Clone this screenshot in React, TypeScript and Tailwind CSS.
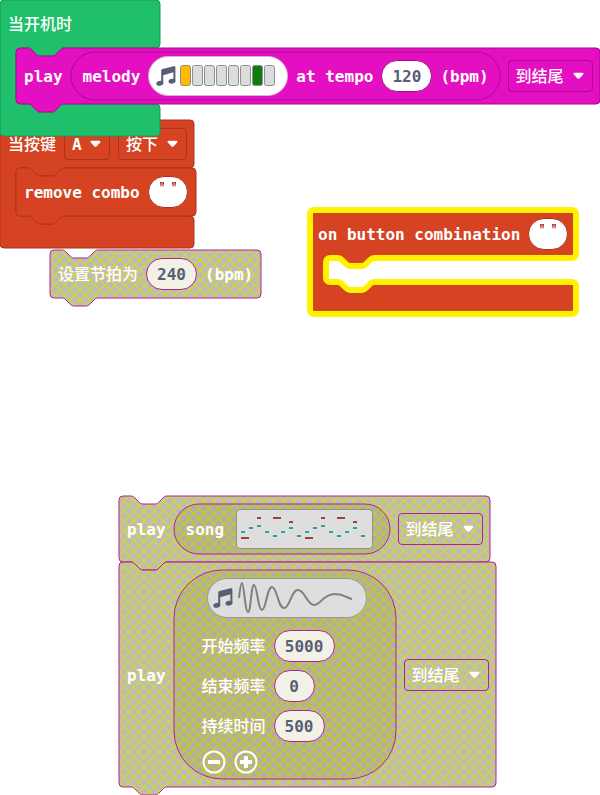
import { useId, type ReactNode } from "react";

const NOTCH_RIGHT = "c2,0 3,1 4,2 l4,4 c1,1 2,2 4,2 h12 c2,0 3,-1 4,-2 l4,-4 c1,-1 2,-2 4,-2";
const NOTCH_LEFT = "c-2,0 -3,1 -4,2 l-4,4 c-1,1 -2,2 -4,2 h-12 c-2,0 -3,-1 -4,-2 l-4,-4 c-1,-1 -2,-2 -4,-2";

/** Outline of a statement block that snaps above and below its neighbours. */
function stackPath(w: number, h: number) {
  return `M0,4 a4,4 0 0 1 4,-4 h8 ${NOTCH_RIGHT} H${w - 4} a4,4 0 0 1 4,4 V${h - 4} a4,4 0 0 1 -4,4 H48 ${NOTCH_LEFT} H4 a4,4 0 0 1 -4,-4 z`;
}

/** Outline of an event block that wraps a statement slot. */
function eventPath(w: number, head: number, slot: number, foot: number) {
  const end = head + slot;
  return `M0,4 a4,4 0 0 1 4,-4 H${w - 4} a4,4 0 0 1 4,4 V${head - 4} a4,4 0 0 1 -4,4 H64 ${NOTCH_LEFT} H20 a4,4 0 0 0 -4,4 V${end - 4} a4,4 0 0 0 4,4 h8 ${NOTCH_RIGHT} H${w - 4} a4,4 0 0 1 4,4 V${end + foot - 4} a4,4 0 0 1 -4,4 H4 a4,4 0 0 1 -4,-4 z`;
}

/** Outline of a value block with rounded ends. */
function valuePath(w: number, h: number, r: number) {
  return `M${r},0 H${w - r} a${r},${r} 0 0 1 ${r},${r} V${h - r} a${r},${r} 0 0 1 -${r},${r} H${r} a${r},${r} 0 0 1 -${r},-${r} V${r} a${r},${r} 0 0 1 ${r},-${r} z`;
}

type ShapeProps = { d: string; fill?: string; stroke: string; strokeWidth?: number };

function Shape({ d, fill, stroke, strokeWidth = 1 }: ShapeProps) {
  const id = useId();
  return (
    <svg className="pointer-events-none absolute inset-0 h-full w-full overflow-visible" aria-hidden="true">
      {!fill && (
        <defs>
          <pattern id={id} patternUnits="userSpaceOnUse" width="10" height="10">
            <rect width="10" height="10" fill="#aaa" />
            <path d="M0,0 L10,10 M10,0 L0,10" stroke="#cc0" strokeWidth="1.25" />
          </pattern>
        </defs>
      )}
      <path
        d={d}
        fill={fill ?? `url(#${id})`}
        fillOpacity={fill ? 1 : 0.8}
        stroke={stroke}
        strokeWidth={strokeWidth}
        strokeLinejoin="round"
      />
    </svg>
  );
}

function Label({ children }: { children: string }) {
  return <span className="pt-0.5">{children}</span>;
}

function ChineseLabel({ children }: { children: string }) {
  return <span className="pt-0.5 font-medium">{children}</span>;
}

function Dropdown({ label, value, border }: { label: string; value: string; border: string }) {
  return (
    <span className="relative inline-flex shrink-0">
      <select
        aria-label={label}
        className={`h-8 appearance-none rounded border bg-transparent pt-0.5 pr-[27px] pl-[7px] ${value === "A" ? "font-semibold" : "font-medium"} ${border}`}
      >
        <option>{value}</option>
      </select>
      <svg className="pointer-events-none absolute top-3 right-[9px]" width="11" height="8" viewBox="0 0 11 8" aria-hidden="true">
        <path d="M1.6,0.8 H9.4 C10.6,0.8 10.8,1.9 10,2.7 L6.5,6.4 C5.9,7 5.1,7 4.5,6.4 L1,2.7 C0.2,1.9 0.4,0.8 1.6,0.8 z" fill="#fff" />
      </svg>
    </span>
  );
}

function NumberField({ label, value, look }: { label: string; value: string; look: string }) {
  return (
    <input
      aria-label={label}
      defaultValue={value}
      className={`h-8 shrink-0 rounded-full border text-center text-[#575e75] ${look}`}
    />
  );
}

function QuoteMark() {
  return (
    <svg width="4" height="5" viewBox="0 0 4 5" aria-hidden="true">
      <path d="M0,0 H1.7 L1.4,4.6 H0.7 z M2.3,0 H4 L3.4,4.6 H2.7 z" fill="#a31515" />
    </svg>
  );
}

function TextField({ label }: { label: string }) {
  return (
    <label className="flex h-8 w-10 shrink-0 items-start justify-center rounded-full border border-[#ab3418] bg-white pt-[5px]">
      <QuoteMark />
      <input aria-label={label} className="h-5 w-2 bg-transparent text-[#575e75] outline-none" />
      <QuoteMark />
    </label>
  );
}

function MusicNote() {
  return (
    <svg className="shrink-0" width="20" height="20" viewBox="0 0 20 20" fill="#575e75" aria-hidden="true">
      <path d="M5.2,5.2 C5.2,4 5.6,3.4 6.6,3.1 L17.6,0.2 C18.8,0 19.4,0.4 19.4,1.6 V15.2 H17.4 V6.2 L7.2,9.2 V17.4 H5.2 z" />
      <ellipse cx="3.8" cy="17.3" rx="3.5" ry="2.4" transform="rotate(-10 3.8 17.3)" />
      <ellipse cx="16" cy="15.2" rx="3.5" ry="2.4" transform="rotate(-10 16 15.2)" />
    </svg>
  );
}

const MELODY = ["#ffb800", "#dcdcdc", "#dcdcdc", "#dcdcdc", "#dcdcdc", "#dcdcdc", "#107c10", "#dcdcdc"];

function MelodyField() {
  return (
    <button
      type="button"
      aria-label="melody"
      className="flex h-10 w-[140px] shrink-0 items-center rounded-full border border-[#d9b0d5] bg-white pl-[7px]"
    >
      <MusicNote />
      <svg className="ml-1" width="96" height="22" aria-hidden="true">
        {MELODY.map((color, i) => (
          <rect key={i} x={i * 12 + 0.5} y="0.5" width="10" height="20" rx="2" fill={color} stroke="#8f8f8f" />
        ))}
      </svg>
    </button>
  );
}

const RED_NOTES = [
  [4, 27, 8], [20, 7, 4], [36, 7, 8], [52, 11, 4],
  [68, 27, 8], [84, 7, 4], [100, 7, 8], [116, 11, 4],
];

const TEAL_NOTES = [
  [4, 21], [12, 17], [20, 15], [28, 21], [36, 25], [44, 21], [52, 17], [60, 25],
  [68, 21], [76, 17], [84, 15], [92, 21], [100, 25], [108, 21], [116, 17], [124, 25],
];

function SongField() {
  return (
    <button type="button" aria-label="song" className="ml-1 h-10 w-[137px] shrink-0 rounded border border-[#8f8f8f] bg-[#dedede]">
      <svg className="block" width="135" height="38" aria-hidden="true">
        {RED_NOTES.map(([x, y, w]) => (
          <rect key={`r${x}`} x={x} y={y} width={w} height="2" fill="#9c4339" />
        ))}
        {TEAL_NOTES.map(([x, y]) => (
          <rect key={`t${x}`} x={x} y={y} width="4" height="2" fill="#28a0a4" />
        ))}
      </svg>
    </button>
  );
}

function SoundField() {
  return (
    <button
      type="button"
      aria-label="sound effect"
      className="mb-3 ml-[5px] flex h-10 w-40 items-center rounded-full border border-[#999] bg-[#dedede] pl-[5px]"
    >
      <MusicNote />
      <svg className="ml-[5px]" width="116" height="34" aria-hidden="true">
        <path
          d="M1,17 C2,8 3,2 4,2 C6,2 7,31 10,31 C13,31 13,4 16,4 C19,4 20,29 24,29 C28,29 29,6 34,6 C39,6 40,27 46,27 C52,27 53,9 60,9 C67,9 69,24 76,24 C83,24 85,13 97,13 C107,13 108,17 114,18"
          fill="none"
          stroke="#808080"
          strokeWidth="2"
        />
      </svg>
    </button>
  );
}

function RoundButton({ label, d }: { label: string; d: string }) {
  return (
    <button type="button" aria-label={label} className="h-6 w-6">
      <svg width="24" height="24" viewBox="0 0 24 24" fill="none" stroke="#fff" aria-hidden="true">
        <circle cx="12" cy="12" r="10.5" strokeWidth="2" />
        <path d={d} strokeWidth="4" />
      </svg>
    </button>
  );
}

function Row({ className = "", children }: { className?: string; children: ReactNode }) {
  return <div className={`relative flex items-center gap-2 whitespace-pre ${className}`}>{children}</div>;
}

const MUTED_LINE = "#b0219f";
const MUTED_BORDER = "border-[#b0219f]";
const MUTED_FIELD = "border-[#b0219f] bg-[#f1f1e6]";

export default function App() {
  return (
    <main className="relative h-screen w-full overflow-hidden bg-white font-['DejaVu_Sans_Mono','Noto_Sans_CJK_SC',monospace] text-base leading-5 font-semibold text-white">
      <section className="absolute top-[120px] left-0 w-[194px]">
        <Shape d={eventPath(194, 48, 48, 32)} fill="#d54322" stroke="#ab3418" />
        <Row className="h-12 pl-2">
          <ChineseLabel>当按键</ChineseLabel>
          <Dropdown label="按键" value="A" border="border-[#ab3418]" />
          <Dropdown label="动作" value="按下" border="border-[#ab3418]" />
        </Row>
        <div className="relative mb-8 ml-4 w-[180px]">
          <Shape d={stackPath(180, 48)} fill="#d54322" stroke="#ab3418" />
          <Row className="h-12 pl-2">
            <Label>remove combo</Label>
            <TextField label="remove combo" />
          </Row>
        </div>
      </section>

      <section className="absolute top-0 left-0 w-40">
        <Shape d={eventPath(160, 48, 56, 32)} fill="#20bf6b" stroke="#1a9956" />
        <Row className="h-12 pl-2">
          <ChineseLabel>当开机时</ChineseLabel>
        </Row>
        <div className="relative mb-8 ml-4 w-[584px]">
          <Shape d={stackPath(584, 56)} fill="#e30fc0" stroke="#a90b8f" />
          <Row className="h-14 pl-2">
            <Label>play</Label>
            <div className="relative w-[429px]">
              <Shape d={valuePath(429, 48, 24)} fill="#e30fc0" stroke="#a90b8f" />
              <Row className="h-12 pl-3">
                <Label>melody</Label>
                <MelodyField />
                <Label>at tempo</Label>
                <NumberField label="tempo" value="120" look="w-[51px] border-[#a90b8f] bg-white" />
                <Label>(bpm)</Label>
              </Row>
            </div>
            <Dropdown label="播放方式" value="到结尾" border="border-[#a90b8f]" />
          </Row>
        </div>
      </section>

      <section className="absolute top-[250px] left-[50px] w-[211px]">
        <Shape d={stackPath(211, 48)} stroke={MUTED_LINE} />
        <Row className="h-12 pl-2">
          <ChineseLabel>设置节拍为</ChineseLabel>
          <NumberField label="节拍" value="240" look={`w-[51px] ${MUTED_FIELD}`} />
          <Label>(bpm)</Label>
        </Row>
      </section>

      <section className="absolute top-[210px] left-[310px] w-[266px]">
        <Shape d={eventPath(266, 48, 24, 32)} fill="#d54322" stroke="#fff200" strokeWidth={6} />
        <Row className="h-12 pl-2">
          <Label>on button combination</Label>
          <TextField label="button combination" />
        </Row>
      </section>

      <section className="absolute top-[496px] left-[119px]">
        <div className="relative w-[371px]">
          <Shape d={stackPath(371, 66)} stroke={MUTED_LINE} />
          <Row className="h-[66px] pl-2">
            <Label>play</Label>
            <div className="relative w-[216px]">
              <Shape d={valuePath(216, 50, 25)} stroke={MUTED_LINE} />
              <Row className="h-[50px] pl-3">
                <Label>song</Label>
                <SongField />
              </Row>
            </div>
            <Dropdown label="歌曲播放方式" value="到结尾" border={MUTED_BORDER} />
          </Row>
        </div>
        <div className="relative w-[377px]">
          <Shape d={stackPath(377, 225)} stroke={MUTED_LINE} />
          <Row className="h-[225px] pl-2">
            <Label>play</Label>
            <div className="relative h-[209px] w-[222px]">
              <Shape d={valuePath(222, 209, 48)} stroke={MUTED_LINE} />
              <div className="relative flex flex-col gap-2 pt-2 pl-7">
                <SoundField />
                <div className="-mt-2 flex flex-col gap-2">
                  <Row>
                    <ChineseLabel>开始频率</ChineseLabel>
                    <NumberField label="开始频率" value="5000" look={`w-[61px] ${MUTED_FIELD}`} />
                  </Row>
                  <Row>
                    <ChineseLabel>结束频率</ChineseLabel>
                    <NumberField label="结束频率" value="0" look={`w-[41px] ${MUTED_FIELD}`} />
                  </Row>
                  <Row>
                    <ChineseLabel>持续时间</ChineseLabel>
                    <NumberField label="持续时间" value="500" look={`w-[51px] ${MUTED_FIELD}`} />
                  </Row>
                </div>
                <Row>
                  <RoundButton label="收起" d="M6,12 H18" />
                  <RoundButton label="展开" d="M6,12 H18 M12,6 V18" />
                </Row>
              </div>
            </div>
            <Dropdown label="音效播放方式" value="到结尾" border={MUTED_BORDER} />
          </Row>
        </div>
      </section>
    </main>
  );
}
